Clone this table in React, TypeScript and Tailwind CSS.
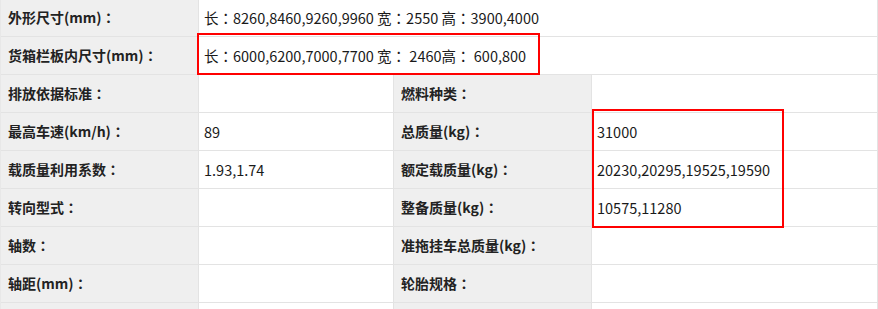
const font = '"Noto Sans CJK SC", "Noto Sans", sans-serif';
const colonFont = '"Noto Sans CJK TC", "Noto Sans CJK SC", sans-serif';

interface Cell {
  label: string;
  value?: string;
}

const wideRows: Cell[] = [
  { label: "外形尺寸(mm)：", value: "长：8260,8460,9260,9960 宽：2550 高：3900,4000" },
  { label: "货箱栏板内尺寸(mm)：", value: "长：6000,6200,7000,7700 宽： 2460高： 600,800" },
];

const pairRows: [Cell, Cell][] = [
  [{ label: "排放依据标准：" }, { label: "燃料种类：" }],
  [{ label: "最高车速(km/h)：", value: "89" }, { label: "总质量(kg)：", value: "31000" }],
  [
    { label: "载质量利用系数：", value: "1.93,1.74" },
    { label: "额定载质量(kg)：", value: "20230,20295,19525,19590" },
  ],
  [{ label: "转向型式：" }, { label: "整备质量(kg)：", value: "10575,11280" }],
  [{ label: "轴数：" }, { label: "准拖挂车总质量(kg)：" }],
  [{ label: "轴距(mm)：" }, { label: "轮胎规格：" }],
  [{ label: "" }, { label: "" }],
];

// full-width colon centred in its cell, like the original page font
function withColons(text: string) {
  return text.split(/(：)/).map((part, i) =>
    part === "：" ? (
      <span key={i} style={{ fontFamily: colonFont }}>
        ：
      </span>
    ) : (
      <span key={i}>{part}</span>
    )
  );
}

function Label({ text }: { text: string }) {
  return (
    <div className="flex items-center whitespace-pre bg-[#efefef] border-r border-[#e3e3e3] pl-[7px] text-[14px] font-bold text-[#222]">
      {withColons(text)}
    </div>
  );
}

function Value({ text }: { text?: string }) {
  return (
    <div className="flex items-center whitespace-pre border-r border-[#e3e3e3] pl-[5px] text-[14.5px] text-[#1a1a1a]">
      {text ? withColons(text) : null}
    </div>
  );
}

export default function App() {
  return (
    <div className="relative h-[309px] w-[878px] overflow-hidden bg-white" style={{ fontFamily: font }}>
      <div className="mt-[-1px] border-l border-[#e8e8e8]">
        {wideRows.map((row) => (
          <div
            key={row.label}
            className="grid h-[38px] grid-cols-[198px_1fr] border-b border-[#e3e3e3]"
          >
            <Label text={row.label} />
            <Value text={row.value} />
          </div>
        ))}
        {pairRows.map((row, i) => (
          <div
            key={i}
            className="grid h-[38px] grid-cols-[198px_195px_198px_1fr] border-b border-[#e3e3e3]"
          >
            <Label text={row[0].label} />
            <Value text={row[0].value} />
            <Label text={row[1].label} />
            <Value text={row[1].value} />
          </div>
        ))}
      </div>

      {/* red annotation boxes */}
      <div className="pointer-events-none absolute left-[197px] top-[33px] h-[42px] w-[343px] border-2 border-[#ff0000]" />
      <div className="pointer-events-none absolute left-[592px] top-[109px] h-[119px] w-[192px] border-2 border-[#ff0000]" />
    </div>
  );
}
